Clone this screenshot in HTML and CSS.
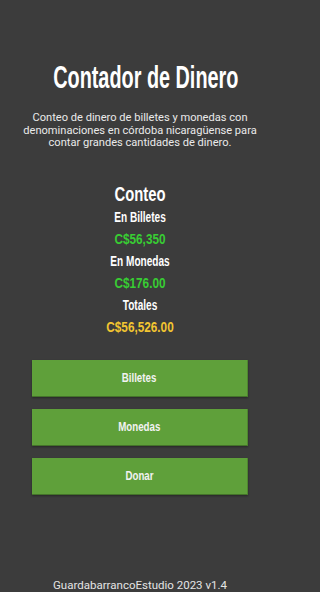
FILE: index.html
```html
<!DOCTYPE html>
<html lang="es">
<head>
<meta charset="utf-8">
<title>Contador de Dinero</title>
<link rel="stylesheet" href="styles.css">
</head>
<body>
<main class="screen">
  <header class="intro">
    <h1 class="title">Contador de Dinero</h1>
    <p class="desc">Conteo de dinero de billetes y monedas con denominaciones en córdoba nicaragüense para contar grandes cantidades de dinero.</p>
  </header>
  <section class="count">
    <h2 class="count-title">Conteo</h2>
    <div class="label">En Billetes</div>
    <div class="amount green">C$56,350</div>
    <div class="label">En Monedas</div>
    <div class="amount green">C$176.00</div>
    <div class="label">Totales</div>
    <div class="amount gold">C$56,526.00</div>
  </section>
  <nav class="actions">
    <button class="btn"><span class="btn-text">Billetes</span></button>
    <button class="btn"><span class="btn-text">Monedas</span></button>
    <button class="btn"><span class="btn-text">Donar</span></button>
  </nav>
  <footer class="footer">GuardabarrancoEstudio 2023 v1.4</footer>
</main>
</body>
</html>
```
FILE: styles.css
```css
html, body {
  margin: 0;
  padding: 0;
  background: #3c3c3c;
}
.screen {
  width: 280px;
  height: 592px;
  display: flex;
  flex-direction: column;
  align-items: stretch;
  font-family: Roboto, "Liberation Sans", sans-serif;
  color: #ececec;
}
.intro {
  padding-top: 57px;
  text-align: center;
}
.title {
  margin: 0;
  white-space: nowrap;
  font-family: "Liberation Sans", Arial, sans-serif;
  font-weight: bold;
  font-size: 32px;
  line-height: 40px;
  color: #ffffff;
  transform: scaleX(0.62);
}
.desc {
  margin: 15px 20px 0;
  font-size: 11.1px;
  line-height: 12.5px;
  color: #eaeaea;
}
.count {
  margin-top: 32px;
  display: flex;
  flex-direction: column;
  text-align: center;
  font-family: "Liberation Sans", Arial, sans-serif;
  font-weight: bold;
}
.count-title {
  margin: 0;
  font-size: 20px;
  line-height: 24px;
  color: #ffffff;
  transform: scaleX(0.74);
}
.label {
  font-size: 14px;
  line-height: 22px;
  color: #ffffff;
  transform: scaleX(0.72);
}
.amount {
  font-size: 14px;
  line-height: 22px;
  transform: scaleX(0.84);
}
.green { color: #38cc33; }
.gold { color: #f2c531; }
.actions {
  margin: 22px 32px 0;
  display: flex;
  flex-direction: column;
  gap: 12px;
}
.btn {
  height: 37px;
  border: none;
  border-right: 1px solid #4f852f;
  border-bottom: 1px solid #44732a;
  background: #5fa03a;
  color: #f2f2f2;
  font-family: "Liberation Sans", Arial, sans-serif;
  font-weight: bold;
  font-size: 13.5px;
  padding: 0;
  box-shadow: 0 1px 2px rgba(0,0,0,0.35);
}
.btn-text {
  display: inline-block;
  transform: scaleX(0.72);
}
.footer {
  margin-top: auto;
  height: 14px;
  line-height: 14px;
  font-size: 11.5px;
  text-align: center;
  color: #e4e4e4;
}
```
